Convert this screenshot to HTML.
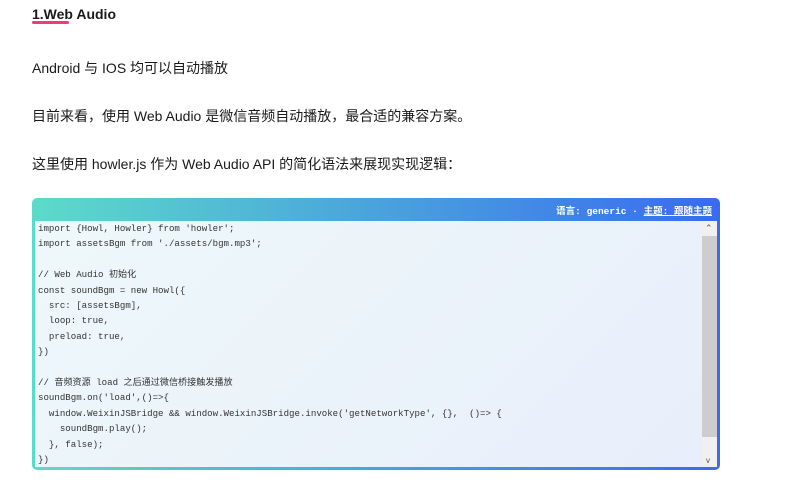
<!DOCTYPE html>
<html><head><meta charset="utf-8"><style>
body{margin:0;width:800px;height:498px;overflow:hidden;background:#fff;font-family:"Liberation Sans","Noto Sans CJK SC",sans-serif;color:#1a1a1a;}
.t{position:absolute;left:32px;font-size:14px;white-space:nowrap;}
h{position:absolute;left:32px;top:6px;font-weight:bold;font-size:14px;}
.ul{position:absolute;left:32px;top:21px;width:37px;height:3px;background:#e8407f;border-radius:2px;}
.box{position:absolute;left:32px;top:198px;width:688px;height:272px;border-radius:5px;background:linear-gradient(90deg,#5cdbc9,#4aa3dc 50%,#3a6af0);}
.hd{position:absolute;right:8px;top:5px;color:#fff;font-size:9.5px;font-weight:bold;font-family:"Liberation Mono","Noto Sans CJK SC",monospace;}
.code{position:absolute;left:3px;top:23px;width:682px;height:246px;background:linear-gradient(135deg,#eef8fa,#e8eefb);overflow:hidden;}
pre{margin:0;position:absolute;left:3px;top:0px;font-family:"Liberation Mono","Noto Sans CJK SC",monospace;font-size:9.1px;line-height:15.4px;color:#333;}
.sb{position:absolute;right:0;top:0;width:15px;height:246px;background:#f0f0f0;}
.th{position:absolute;left:0;top:15px;width:15px;height:201px;background:#cdcdcd;}
</style></head><body>
<h>1.Web Audio</h><div class="ul"></div>
<div class="t" style="top:58px">Android 与 IOS 均可以自动播放</div>
<div class="t" style="top:106px">目前来看，使用 Web Audio 是微信音频自动播放，最合适的兼容方案。</div>
<div class="t" style="top:154px">这里使用 howler.js 作为 Web Audio API 的简化语法来展现实现逻辑：</div>
<div class="box"><div class="hd">语言: generic · <u>主题: 跟随主题</u></div>
<div class="code"><pre>import {Howl, Howler} from 'howler';
import assetsBgm from './assets/bgm.mp3';

// Web Audio 初始化
const soundBgm = new Howl({
  src: [assetsBgm],
  loop: true,
  preload: true,
})

// 音频资源 load 之后通过微信桥接触发播放
soundBgm.on('load',()=>{
  window.WeixinJSBridge &amp;&amp; window.WeixinJSBridge.invoke('getNetworkType', {},  ()=> {
    soundBgm.play();
  }, false);
})</pre>
<div class="sb"><div style="position:absolute;top:2px;left:3px;font-size:9px;color:#555">&#8963;</div><div class="th"></div><div style="position:absolute;bottom:2px;left:4px;font-size:8px;color:#555">v</div></div></div></div>
</body></html>
